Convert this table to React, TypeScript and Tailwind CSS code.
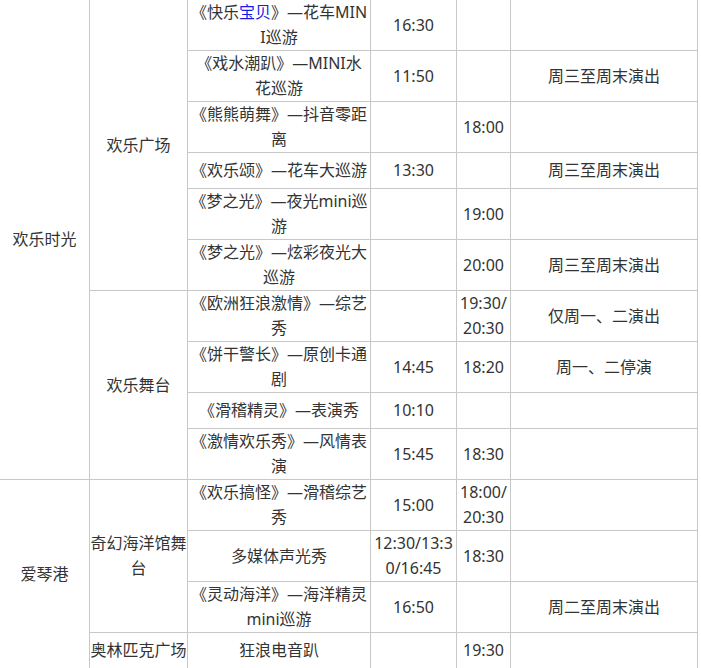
import React from "react";

type Row = {
  show: React.ReactNode;
  t1: React.ReactNode;
  t2: React.ReactNode;
  note: string;
};

const rows: Row[] = [
  {
    show: (
      <>
        《快乐<span className="text-[#1a1ae6]">宝贝</span>》—花车MIN
        <br />I巡游
      </>
    ),
    t1: "16:30",
    t2: "",
    note: "",
  },
  { show: <>《戏水潮趴》—MINI水<br />花巡游</>, t1: "11:50", t2: "", note: "周三至周末演出" },
  { show: <>《熊熊萌舞》—抖音零距<br />离</>, t1: "", t2: "18:00", note: "" },
  { show: <>《欢乐颂》—花车大巡游</>, t1: "13:30", t2: "", note: "周三至周末演出" },
  { show: <>《梦之光》—夜光mini巡<br />游</>, t1: "", t2: "19:00", note: "" },
  { show: <>《梦之光》—炫彩夜光大<br />巡游</>, t1: "", t2: "20:00", note: "周三至周末演出" },
  { show: <>《欧洲狂浪激情》—综艺<br />秀</>, t1: "", t2: <>19:30/<br />20:30</>, note: "仅周一、二演出" },
  { show: <>《饼干警长》—原创卡通<br />剧</>, t1: "14:45", t2: "18:20", note: "周一、二停演" },
  { show: <>《滑稽精灵》—表演秀</>, t1: "10:10", t2: "", note: "" },
  { show: <>《激情欢乐秀》—风情表<br />演</>, t1: "15:45", t2: "18:30", note: "" },
  { show: <>《欢乐搞怪》—滑稽综艺<br />秀</>, t1: "15:00", t2: <>18:00/<br />20:30</>, note: "" },
  { show: <>多媒体声光秀</>, t1: <>12:30/13:3<br />0/16:45</>, t2: "18:30", note: "" },
  { show: <>《灵动海洋》—海洋精灵<br />mini巡游</>, t1: "16:50", t2: "", note: "周二至周末演出" },
  { show: <>狂浪电音趴</>, t1: "", t2: "19:30", note: "" },
];

function Cell({ children, className = "" }: { children?: React.ReactNode; className?: string }) {
  return (
    <div className={`flex items-center justify-center bg-white text-center whitespace-nowrap ${className}`}>
      <div>{children}</div>
    </div>
  );
}

export default function App() {
  const cells: React.ReactNode[] = [];
  rows.forEach((r, i) => {
    if (i === 0) cells.push(<Cell key="a1" className="row-span-10">欢乐时光</Cell>);
    if (i === 10) cells.push(<Cell key="a2" className="row-span-5">爱琴港</Cell>);
    if (i === 0) cells.push(<Cell key="b1" className="row-span-6">欢乐广场</Cell>);
    if (i === 6) cells.push(<Cell key="b2" className="row-span-4">欢乐舞台</Cell>);
    if (i === 10)
      cells.push(
        <Cell key="b3" className="row-span-3">
          奇幻海洋馆舞
          <br />台
        </Cell>
      );
    if (i === 13) cells.push(<Cell key="b4">奥林匹克广场</Cell>);
    cells.push(<Cell key={`s${i}`}>{r.show}</Cell>);
    cells.push(<Cell key={`t${i}`}>{r.t1}</Cell>);
    cells.push(<Cell key={`u${i}`}>{r.t2}</Cell>);
    cells.push(<Cell key={`n${i}`}>{r.note}</Cell>);
  });

  return (
    <div className="h-[668px] w-[701px] overflow-hidden bg-white font-['Noto_Sans','Noto_Sans_CJK_SC',sans-serif] text-[16px] leading-[25px] text-[#333333]">
      <div className="grid w-fit grid-cols-[89px_97px_182px_85px_53px_186px] grid-rows-[50px_50px_50px_35px_50px_50px_50px_50px_35px_50px_50px_50px_50px_35px] gap-px border-r border-b border-[#c8c8c8] bg-[#c8c8c8]">
        {cells}
      </div>
    </div>
  );
}
